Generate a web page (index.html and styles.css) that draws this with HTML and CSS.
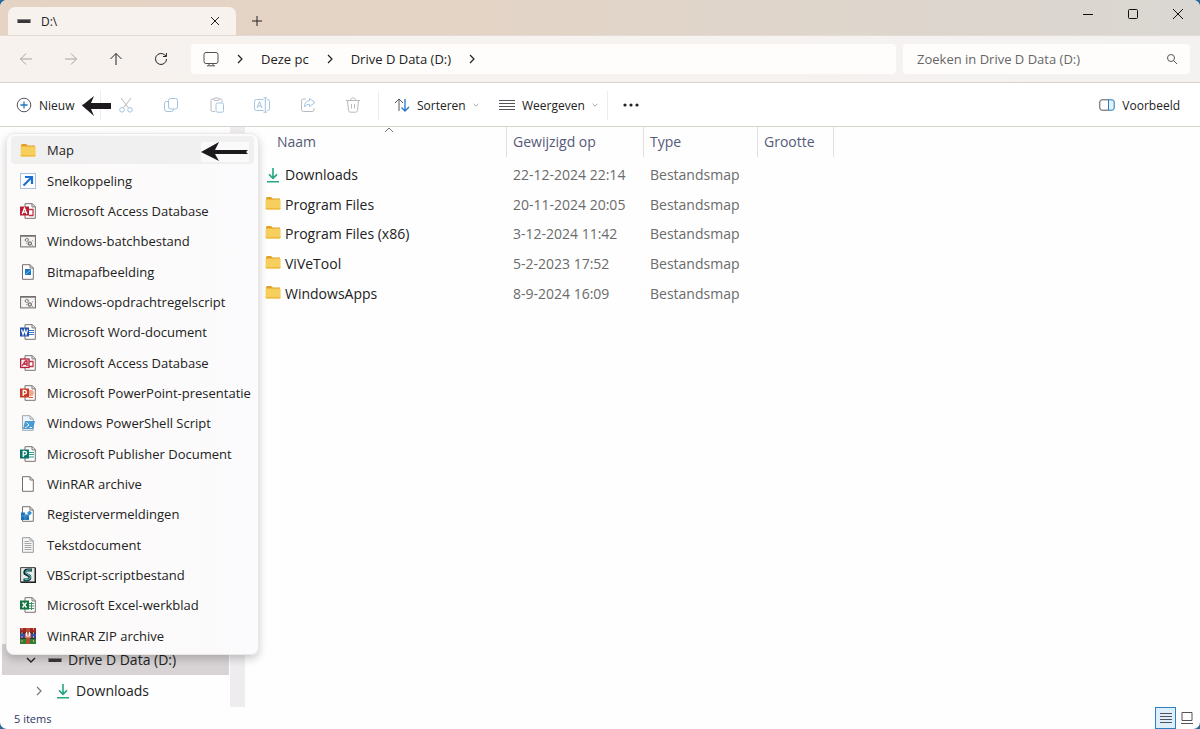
FILE: index.html
```html
<!DOCTYPE html>
<html lang="nl">
<head>
    <meta charset="UTF-8">
    <meta name="viewport" content="width=device-width, initial-scale=1.0">
    <title>D:\</title>
    <link rel="stylesheet" href="styles.css">
</head>
<body>
    <svg class="sprite" aria-hidden="true">
        <symbol id="folder" viewBox="0 0 16 14">
            <path d="M1 2.5Q1 1 2.2 1H6l1.8 1.6H15V6H1z" fill="#e2a126"/>
            <rect x="0.6" y="3.4" width="15" height="10" rx="1" fill="#f7cf5d"/>
            <path d="M0.6 12h15v.6q0 .8-1 .8h-13q-1 0-1-.8z" fill="#efba3e"/>
        </symbol>
        <symbol id="download" viewBox="0 0 14 16">
            <path d="M7 1v10M3 7.4l4 4 4-4M1 14.7h12" fill="none" stroke="#25a584" stroke-width="1.6"/>
        </symbol>
        <symbol id="drive" viewBox="0 0 14 6">
            <rect x="0.5" y="1" width="13" height="4" fill="#39363a"/>
            <path d="M1 1.5h12" stroke="#85807f" stroke-width="1"/>
        </symbol>
        <symbol id="chevron" viewBox="0 0 10 10">
            <path d="M3 1l4 4-4 4" fill="none" stroke="currentColor" stroke-width="1.2"/>
        </symbol>
        <symbol id="chevron-down" viewBox="0 0 10 10">
            <path d="M1 3l4 4 4-4" fill="none" stroke="currentColor" stroke-width="1.4"/>
        </symbol>
        <symbol id="page" viewBox="0 0 16 16">
            <path d="M2.5.7h7.6l3.2 3.2v11.4H2.5z" fill="#fff" stroke="#77716f"/>
            <path d="M10 .8V4h3.3" fill="none" stroke="#77716f"/>
        </symbol>
        <symbol id="office-page" viewBox="0 0 16 16">
            <path d="M5 .7h7.4l2.9 2.9v11.7H5z" fill="#fff" stroke="#77716f"/>
            <path d="M12 .8v3.1h3.2" fill="none" stroke="#77716f"/>
        </symbol>
        <symbol id="console" viewBox="0 0 16 16">
            <rect x="0.6" y="2.5" width="14.8" height="11.4" fill="#f4f3f3" stroke="#6e6a69"/>
            <path d="M1 3.4h14" stroke="#8c8988"/>
            <circle cx="6.8" cy="7" r="1.5" fill="none" stroke="#868382"/>
            <circle cx="9.8" cy="10.4" r="1.6" fill="none" stroke="#777372" stroke-width="1.3"/>
            <path d="M6.8 4.7v1M4.5 7h1M9.2 6l-1 .4M7.2 10.4h-1M12 8.2l.8-.6M12 12.2l.8.6" stroke="#868382"/>
        </symbol>
    </svg>

    <div class="window">
        <header class="titlebar">
            <div class="tab">
                <svg class="drive-icon"><use href="#drive"/></svg>
                <span class="tab-title">D:\</span>
                <button class="icon-button" aria-label="Tabblad sluiten">
                    <svg width="10" height="10" viewBox="0 0 10 10"><path d="M1 1l8 8M9 1L1 9"/></svg>
                </button>
            </div>
            <button class="icon-button new-tab" aria-label="Nieuw tabblad">
                <svg width="12" height="12" viewBox="0 0 12 12"><path d="M6 1v10M1 6h10"/></svg>
            </button>
            <div class="window-controls">
                <button class="icon-button" aria-label="Minimaliseren">
                    <svg width="12" height="12" viewBox="0 0 12 12"><path d="M1 6.5h10"/></svg>
                </button>
                <button class="icon-button" aria-label="Maximaliseren">
                    <svg width="12" height="12" viewBox="0 0 12 12"><rect x="1.5" y="1.5" width="9" height="9" rx="1"/></svg>
                </button>
                <button class="icon-button" aria-label="Sluiten">
                    <svg width="12" height="12" viewBox="0 0 12 12"><path d="M1 1l10 10M11 1L1 11"/></svg>
                </button>
            </div>
        </header>

        <div class="navbar">
            <div class="nav-buttons">
                <button class="icon-button dim" aria-label="Vorige">
                    <svg width="14" height="14" viewBox="0 0 14 14"><path d="M13 7H1.5M7 1.5L1.5 7 7 12.5"/></svg>
                </button>
                <button class="icon-button dim" aria-label="Volgende">
                    <svg width="14" height="14" viewBox="0 0 14 14"><path d="M1 7h11.5M7 1.5L12.5 7 7 12.5"/></svg>
                </button>
                <button class="icon-button" aria-label="Omhoog">
                    <svg width="14" height="14" viewBox="0 0 14 14"><path d="M7 13V1.5M1.5 7L7 1.5 12.5 7"/></svg>
                </button>
                <button class="icon-button" aria-label="Vernieuwen">
                    <svg width="14" height="14" viewBox="0 0 14 14"><path d="M12.5 7A5.5 5.5 0 1 1 10.8 3L12.3 4.3M12.4 1v3.5H9"/></svg>
                </button>
            </div>
            <nav class="address">
                <svg class="monitor" width="16" height="16" viewBox="0 0 16 16"><rect x="1" y="1.5" width="14" height="11" rx="2"/><path d="M6 12.5v2M10 12.5v2M4 14.8h8"/></svg>
                <svg class="chevron"><use href="#chevron"/></svg>
                <a href="#">Deze pc</a>
                <svg class="chevron"><use href="#chevron"/></svg>
                <a href="#">Drive D Data (D:)</a>
                <svg class="chevron"><use href="#chevron"/></svg>
            </nav>
            <div class="search">
                <input type="text" aria-label="Zoeken" placeholder="Zoeken in Drive D Data (D:)">
                <svg width="12" height="12" viewBox="0 0 12 12"><circle cx="5" cy="5" r="3.5"/><path d="M7.6 7.6L11 11"/></svg>
            </div>
        </div>

        <div class="toolbar">
            <button class="tool new">
                <svg width="16" height="16" viewBox="0 0 16 16"><circle cx="8" cy="8" r="6.8" stroke="#55535a"/><path d="M8 4.5v7M4.5 8h7" stroke="#2377b8" stroke-width="1.3"/></svg>
                <span>Nieuw</span>
                <svg class="caret"><use href="#chevron-down"/></svg>
            </button>
            <svg class="pointer" width="30" height="20" viewBox="0 0 30 20"><path d="M0 9.5L12 0 9 7h20v6H9l3 7z"/></svg>
            <div class="file-actions">
                <button class="icon-button" aria-label="Knippen">
                    <svg width="16" height="16" viewBox="0 0 16 16"><path d="M3 1l7.5 10M13 1L5.5 11" stroke="#b9b9bf"/><circle cx="4" cy="12.8" r="2.3"/><circle cx="12" cy="12.8" r="2.3"/></svg>
                </button>
                <button class="icon-button" aria-label="Kopiëren">
                    <svg width="16" height="16" viewBox="0 0 16 16"><rect x="5.5" y="1.5" width="9" height="10.5" rx="2"/><path d="M5 4.5H3.5q-2 0-2 2v5.5q0 2.5 2.5 2.5h4.5q2 0 2-2"/></svg>
                </button>
                <button class="icon-button" aria-label="Plakken">
                    <svg width="16" height="16" viewBox="0 0 16 16"><path d="M6 14.5H3.5q-1.5 0-1.5-1.5V3.5Q2 2 3.5 2H5M10 2h1.5Q13 2 13 3.5V5" stroke="#b9b9bf"/><rect x="5" y="1" width="5" height="2.5" rx="1" stroke="#b9b9bf"/><rect x="7" y="6" width="7.5" height="9.2" rx="1.5"/></svg>
                </button>
                <button class="icon-button" aria-label="Naam wijzigen">
                    <svg width="16" height="16" viewBox="0 0 16 16"><path d="M9.5 2.5h-7q-2 0-2 2v7q0 2 2 2h7M13 2.5h.5q2 0 2 2v7q0 2-2 2H13M9.5.8H13M9.5 15.2H13M11.3.8v14.4M3 11l2.5-6.5L8 11M3.8 9h3.4"/></svg>
                </button>
                <button class="icon-button" aria-label="Delen">
                    <svg width="16" height="16" viewBox="0 0 16 16"><path d="M6 2H3.5q-2 0-2 2v8.5q0 2 2 2H12q2 0 2-2V11" stroke="#b9b9bf"/><path d="M9.5 1.5l5.5 4-5.5 4V7.2Q6 7 4.5 10q0-6 5-6.3z"/></svg>
                </button>
                <button class="icon-button" aria-label="Verwijderen">
                    <svg class="grey" width="16" height="16" viewBox="0 0 16 16"><path d="M1 3.5h14M2.5 3.5l1 10q.2 1.7 2 1.7h5q1.8 0 2-1.7l1-10M5.5 3Q6 .8 8 .8T10.500 3M6.5 7v4.5M9.5 7v4.5"/></svg>
                </button>
            </div>
            <button class="tool sort">
                <svg width="16" height="16" viewBox="0 0 16 16"><path d="M5 14V2M1 6l4-4 4 4" stroke="#55535a"/><path d="M11 2v12M7.5 10.5L11 14l4-4" stroke="#2377c8" stroke-width="1.3"/></svg>
                <span>Sorteren</span>
                <svg class="caret"><use href="#chevron-down"/></svg>
            </button>
            <button class="tool view">
                <svg width="16" height="16" viewBox="0 0 16 16"><path d="M0 3.5h16M0 6.5h16M0 9.5h16M0 12.5h16" stroke="#55535a"/></svg>
                <span>Weergeven</span>
                <svg class="caret"><use href="#chevron-down"/></svg>
            </button>
            <button class="tool more" aria-label="Meer">
                <svg width="16" height="4" viewBox="0 0 16 4"><g fill="#222" stroke="none"><circle cx="2" cy="2" r="1.6"/><circle cx="8" cy="2" r="1.6"/><circle cx="14" cy="2" r="1.6"/></g></svg>
            </button>
            <button class="tool preview">
                <svg width="16" height="12" viewBox="0 0 16 12"><path d="M9.5.8H3Q.8.8.8 3v6Q.8 11.2 3 11.2h6.5" stroke="#55535a"/><path d="M9.5.8H13q2.2 0 2.2 2.2v6q0 2.2-2.2 2.2H9.500z" fill="#e3f2fb" stroke="#2377b8"/></svg>
                <span>Voorbeeld</span>
            </button>
        </div>

        <main class="content">
            <aside class="sidebar">
                <ul class="tree">
                    <li class="selected">
                        <svg class="chevron"><use href="#chevron-down"/></svg>
                        <svg class="drive-icon"><use href="#drive"/></svg>
                        <a href="#">Drive D Data (D:)</a>
                    </li>
                    <li class="child">
                        <svg class="chevron"><use href="#chevron"/></svg>
                        <svg class="download-icon"><use href="#download"/></svg>
                        <a href="#">Downloads</a>
                    </li>
                </ul>
                <div class="scrollbar"></div>
            </aside>

            <section class="files">
                <svg class="sort-mark" width="10" height="6" viewBox="0 0 10 6"><path d="M1 5l4-4 4 4"/></svg>
                <table>
                    <thead>
                        <tr>
                            <th class="col-name"><div class="head">Naam</div></th>
                            <th class="col-date"><div class="head">Gewijzigd op</div></th>
                            <th class="col-type"><div class="head">Type</div></th>
                            <th class="col-size"><div class="head">Grootte</div></th>
                        </tr>
                    </thead>
                    <tbody>
                        <tr>
                            <td><div class="file"><svg class="download-icon"><use href="#download"/></svg>Downloads</div></td>
                            <td>22-12-2024 22:14</td>
                            <td>Bestandsmap</td>
                            <td></td>
                        </tr>
                        <tr>
                            <td><div class="file"><svg class="folder-icon"><use href="#folder"/></svg>Program Files</div></td>
                            <td>20-11-2024 20:05</td>
                            <td>Bestandsmap</td>
                            <td></td>
                        </tr>
                        <tr>
                            <td><div class="file"><svg class="folder-icon"><use href="#folder"/></svg>Program Files (x86)</div></td>
                            <td>3-12-2024 11:42</td>
                            <td>Bestandsmap</td>
                            <td></td>
                        </tr>
                        <tr>
                            <td><div class="file"><svg class="folder-icon"><use href="#folder"/></svg>ViVeTool</div></td>
                            <td>5-2-2023 17:52</td>
                            <td>Bestandsmap</td>
                            <td></td>
                        </tr>
                        <tr>
                            <td><div class="file"><svg class="folder-icon"><use href="#folder"/></svg>WindowsApps</div></td>
                            <td>8-9-2024 16:09</td>
                            <td>Bestandsmap</td>
                            <td></td>
                        </tr>
                    </tbody>
                </table>
            </section>

            <div class="menu">
                <button class="menu-item active">
                    <svg viewBox="0 0 16 16"><use href="#folder" y="1" width="16" height="14"/></svg>
                    <span>Map</span>
                    <svg class="menu-pointer" viewBox="0 0 48 20"><path d="M0 10L18 0 14 8h33l-2 2 2 2H14l4 7z"/></svg>
                </button>
                <button class="menu-item">
                    <svg viewBox="0 0 16 16"><rect x="0.5" y="0.5" width="15" height="15" fill="#fdfdff" stroke="#a8c1df"/><path d="M3.5 12.5l8-8M5 4h7v7" fill="none" stroke="#1b6fd0" stroke-width="2.2"/></svg>
                    <span>Snelkoppeling</span>
                </button>
                <button class="menu-item">
                    <svg viewBox="0 0 16 16"><use href="#office-page"/><path d="M9 6.5h4v6H9" fill="none" stroke="#c4374a" stroke-width="1.3"/><rect y="3.5" width="9" height="9" fill="#ba1f35"/><path d="M2.2 11l2.3-6 2.3 6M3 9.2h3" fill="none" stroke="#fff" stroke-width="1.3"/></svg>
                    <span>Microsoft Access Database</span>
                </button>
                <button class="menu-item">
                    <svg viewBox="0 0 16 16"><use href="#console"/></svg>
                    <span>Windows-batchbestand</span>
                </button>
                <button class="menu-item">
                    <svg viewBox="0 0 16 16"><use href="#page"/><rect x="5" y="5" width="6" height="6" fill="#1976c5"/><path d="M5.5 10.5L10.5 6" stroke="#73c7f3"/></svg>
                    <span>Bitmapafbeelding</span>
                </button>
                <button class="menu-item">
                    <svg viewBox="0 0 16 16"><use href="#console"/></svg>
                    <span>Windows-opdrachtregelscript</span>
                </button>
                <button class="menu-item">
                    <svg viewBox="0 0 16 16"><use href="#office-page"/><path d="M9 6.5h5M9 8.5h5M9 10.5h5" stroke="#3b7cd3"/><rect y="3.5" width="9" height="9" fill="#2450ac"/><path d="M1.5 5.5L3 10.5l1.5-4.5L6 10.5l1.5-5" fill="none" stroke="#fff" stroke-width="1.2"/></svg>
                    <span>Microsoft Word-document</span>
                </button>
                <button class="menu-item">
                    <svg viewBox="0 0 16 16"><use href="#office-page"/><path d="M9 6.5h4v5H9" fill="none" stroke="#c4374a" stroke-width="1.3"/><rect x="0.6" y="4" width="8.4" height="8.5" fill="#fbe9ec" stroke="#b42039" stroke-width="1.3"/><path d="M2 11l3.5-5H7v5M4 9h3" fill="none" stroke="#b42039" stroke-width="1.3"/></svg>
                    <span>Microsoft Access Database</span>
                </button>
                <button class="menu-item">
                    <svg viewBox="0 0 16 16"><use href="#office-page"/><circle cx="10.5" cy="8" r="3.3" fill="#f3a78e"/><path d="M9 12.5h4" stroke="#d35230"/><rect y="3.5" width="9" height="9" fill="#c43a22"/><path d="M3.2 11V5.5h1.5q1.8 0 1.8 1.6T4.7 8.8H3.2" fill="none" stroke="#fff" stroke-width="1.3"/></svg>
                    <span>Microsoft PowerPoint-presentatie</span>
                </button>
                <button class="menu-item">
                    <svg viewBox="0 0 16 16"><path d="M2.5.7h7.6l3.2 3.2v11.4H2.5z" fill="#eef5fb" stroke="#9da7b0"/><path d="M10 1v3h3" fill="none" stroke="#9da7b0"/><path d="M5 6h10l-2 8H3z" fill="#4a9ad4"/><path d="M6.5 7.5L9 10l-4 3M9.5 12.5H12" fill="none" stroke="#e6f6ff"/></svg>
                    <span>Windows PowerShell Script</span>
                </button>
                <button class="menu-item">
                    <svg viewBox="0 0 16 16"><use href="#office-page"/><path d="M9 6.5h5M9 8.5h5M9 11h5" stroke="#2aa391"/><rect y="3.5" width="9" height="9" fill="#0b7568"/><path d="M3.2 11V5.5h1.5q1.8 0 1.8 1.6T4.7 8.8H3.2" fill="none" stroke="#fff" stroke-width="1.3"/></svg>
                    <span>Microsoft Publisher Document</span>
                </button>
                <button class="menu-item">
                    <svg viewBox="0 0 16 16"><use href="#page"/></svg>
                    <span>WinRAR archive</span>
                </button>
                <button class="menu-item">
                    <svg viewBox="0 0 16 16"><use href="#page"/><path d="M1 6.5h4v2h4V14H1z" fill="#1d71b5"/><path d="M1 10h8M5 6.500V14" stroke="#6db3e2" stroke-width=".6"/><path d="M9.500 4.500l2.500 2.500-2.500 2.500L7 7z" fill="#3191d6"/></svg>
                    <span>Registervermeldingen</span>
                </button>
                <button class="menu-item">
                    <svg viewBox="0 0 16 16"><path d="M2.5.7h7.6l3.2 3.2v11.4H2.5z" fill="#f5f5f5" stroke="#999"/><path d="M10 1v3h3M4.5 4.5H9M4.5 6.5h7M4.5 8.5h7M4.5 10.5h7M4.5 12.5h7" fill="none" stroke="#a5a5a5"/></svg>
                    <span>Tekstdocument</span>
                </button>
                <button class="menu-item">
                    <svg viewBox="0 0 16 16"><path d="M.6.6h14.8v14.8H.6z" fill="#e5ecec" stroke="#444"/><path d="M1 15.3h14.3V1" fill="none" stroke="#222" stroke-width="1.4"/><path d="M12 3H7.5Q4 3.5 5 6.500l4.500 2.500q1.500 3-2 4H3.500" fill="none" stroke="#17282b" stroke-width="3"/><path d="M11.500 3H8Q5 4 6 6.200l4 2.600q1 3-2.500 3.800H4.500" fill="none" stroke="#49c5c5" stroke-width="1.2"/></svg>
                    <span>VBScript-scriptbestand</span>
                </button>
                <button class="menu-item">
                    <svg viewBox="0 0 16 16"><use href="#office-page"/><path d="M9 6.5h5M9 9h5M9 11.5h5M11.5 5v8" stroke="#3d9662"/><rect y="3.5" width="9" height="9" fill="#167341"/><path d="M2.5 5.5l4 5M6.5 5.5l-4 5" stroke="#fff" stroke-width="1.4"/></svg>
                    <span>Microsoft Excel-werkblad</span>
                </button>
                <button class="menu-item">
                    <svg viewBox="0 0 16 16"><path d="M0 0h16v5H0z" fill="#a1252c"/><path d="M0 5h16v5H0z" fill="#344fae"/><path d="M0 10h16v6H0z" fill="#2e7e39"/><path d="M0 5h16M0 10.2h16" stroke="#302331"/><path d="M2 0v16M13.5 0v16" stroke="#cdab55" stroke-dasharray="2 2"/><path d="M6 0h4v16H6z" fill="#b3502c"/><path d="M5 5h6v5H5z" fill="#e07a5a"/><path d="M6.500 4v4h3V4" fill="none" stroke="#fff"/></svg>
                    <span>WinRAR ZIP archive</span>
                </button>
            </div>
        </main>

        <footer class="statusbar">
            <span class="count">5 items</span>
            <button class="view-toggle on" aria-label="Details">
                <svg width="12" height="12" viewBox="0 0 12 12"><path d="M0 1.5h12M0 4.5h12M0 7.5h12M0 10.5h12"/></svg>
            </button>
            <button class="view-toggle" aria-label="Grote pictogrammen">
                <svg width="12" height="12" viewBox="0 0 12 12"><path d="M1 .5h10v8H1zM0 11.5h12"/></svg>
            </button>
        </footer>
    </div>
</body>
</html>
```

FILE: styles.css
```css
* {
    box-sizing: border-box;
}

body {
    margin: 0;
    background-color: #2b6a9b;
    font-family: "Open Sans", "Noto Sans", sans-serif;
    font-size: 13px;
    color: #222;
}

button {
    border: none;
    background: none;
    padding: 0;
    font: inherit;
    color: inherit;
}

a {
    color: inherit;
    text-decoration: none;
}

svg {
    flex: none;
    fill: none;
    stroke: currentColor;
}

use {
    stroke: none;
}

.sprite {
    display: none;
}

.window {
    display: flex;
    flex-direction: column;
    min-height: 100vh;
    border-radius: 7px;
    overflow: hidden;
    background-color: #fefefe;
}

.icon-button {
    display: flex;
    align-items: center;
    justify-content: center;
}

/* title bar */
.titlebar {
    display: flex;
    align-items: flex-end;
    height: 35px;
    padding-left: 8px;
    background: linear-gradient(to right, #e5d3c3, #e3d4c6 40%, #dad7d2);
}

.tab {
    display: flex;
    align-items: center;
    width: 228px;
    height: 28px;
    padding: 0 16px 0 9px;
    border-radius: 7px 7px 0 0;
    background-color: #f7f2ee;
    font-size: 12px;
}

.tab-title {
    flex: 1;
    padding-left: 10px;
}

.drive-icon {
    width: 14px;
    height: 6px;
}

.new-tab {
    width: 42px;
    height: 28px;
}

.window-controls {
    display: flex;
    align-self: flex-start;
    margin-left: auto;
}

.window-controls .icon-button {
    width: 45px;
    height: 27px;
    color: #111;
}

/* navigation */
.navbar {
    display: flex;
    align-items: center;
    gap: 7px;
    height: 48px;
    padding: 0 10px 0 3px;
    border-top: 1px solid #e3dad5;
    border-bottom: 1px solid #d9d2cf;
    background: linear-gradient(to right, #f7f2ee, #f4f2f1);
}

.nav-buttons {
    display: grid;
    grid-template-columns: repeat(4, 1fr);
    width: 181px;
}

.dim {
    color: #a8a3a0;
}

.address,
.search {
    display: flex;
    align-items: center;
    height: 30px;
    border-radius: 4px;
    background-color: #fefdfc;
}

.address {
    flex: 1;
    gap: 16px;
    padding-left: 12px;
}

.monitor {
    color: #55504e;
}

.chevron {
    width: 10px;
    height: 10px;
}

.search {
    width: 287px;
    padding: 0 12px 0 14px;
    color: #555;
}

.search input {
    flex: 1;
    min-width: 0;
    padding: 0;
    border: none;
    outline: none;
    background: none;
    font: inherit;
}

.search input::placeholder {
    color: #666;
}

/* toolbar */
.toolbar {
    position: relative;
    display: flex;
    align-items: center;
    height: 44px;
    padding-top: 1px;
    border-bottom: 1px solid #d8d4cd;
    background-color: #fff;
    font-size: 12px;
}

.tool {
    display: flex;
    align-items: center;
    gap: 7px;
    height: 29px;
}

.new {
    width: 101px;
    padding-left: 16px;
    border-right: 1px solid #ececec;
}

.caret {
    width: 6px;
    height: 6px;
    color: #999;
}

.pointer {
    position: absolute;
    left: 82px;
    top: 13px;
    fill: #1c1a1c;
    stroke: none;
}

.file-actions {
    display: grid;
    grid-template-columns: repeat(6, 1fr);
    width: 275px;
    padding-left: 2px;
    color: #a3c4df;
}

.grey {
    color: #b9b9bf;
}

.sort {
    width: 107px;
    padding-left: 15px;
    margin-left: 2px;
    border-left: 1px solid #ececec;
}

.view {
    width: 122px;
    padding-left: 14px;
}

.more {
    padding-left: 15px;
    border-left: 1px solid #ececec;
}

.preview {
    margin-left: auto;
    padding-right: 20px;
}

/* content */
.content {
    position: relative;
    display: flex;
    flex: 1;
}

.sidebar {
    display: flex;
    align-items: flex-end;
    width: 245px;
    padding-left: 2px;
    font-size: 14px;
}

.tree {
    flex: 1;
    margin: 0 1px 1px 0;
    padding: 0;
    list-style: none;
}

.tree li {
    display: flex;
    align-items: center;
    gap: 6px;
    height: 31px;
    padding-left: 24px;
}

.tree .chevron {
    margin-right: 6px;
}

.tree .selected {
    background-color: #d8d4d5;
}

.tree .child {
    padding-left: 32px;
}

.child .chevron {
    color: #777;
}

.scrollbar {
    align-self: stretch;
    width: 15px;
    background-color: #eeecef;
}

.files {
    position: relative;
    flex: 1;
}

.files table {
    width: 589px;
    height: 181px;
    border-collapse: collapse;
    table-layout: fixed;
    font-size: 14px;
}

.files th {
    height: 33px;
    padding: 0;
    vertical-align: top;
    text-align: left;
    font-weight: normal;
    color: #565a78;
}

.head {
    height: 30px;
    padding-left: 6px;
    border-right: 1px solid #e3e0e2;
    line-height: 30px;
}

.col-name {
    width: 262px;
}

.col-name .head {
    padding-left: 32px;
}

.col-date {
    width: 137px;
}

.col-type {
    width: 114px;
}

.files td {
    padding: 0 6px;
    color: #6b6b6b;
}

.files td:first-child {
    padding-left: 20px;
    color: #222;
}

.file {
    display: flex;
    align-items: center;
    gap: 4px;
}

.folder-icon {
    width: 16px;
    height: 14px;
}

.file .folder-icon {
    margin-bottom: 3px;
}

.download-icon {
    width: 14px;
    height: 16px;
}

.file .download-icon {
    width: 16px;
}

.sort-mark {
    position: absolute;
    left: 139px;
    top: 0;
    color: #777;
}

/* new item menu */
.menu {
    position: absolute;
    top: 6px;
    left: 6px;
    display: grid;
    grid-auto-rows: 1fr;
    width: 253px;
    min-height: 522px;
    padding: 1px 4px 3px;
    border: 1px solid #ebe8e8;
    border-radius: 8px;
    background: linear-gradient(to right, #fdfbf9, #fbfafc);
    box-shadow: 0 4px 8px rgba(0, 0, 0, 0.2);
}

.menu-item {
    display: flex;
    align-items: center;
    gap: 11px;
    margin: 1px 0;
    padding-left: 9px;
    border-radius: 4px;
    white-space: nowrap;
}

.menu-item svg {
    width: 16px;
    height: 16px;
    stroke: none;
}

.menu-item.active {
    background-color: #f1f0f0;
}

.menu-item .menu-pointer {
    width: 48px;
    height: 20px;
    margin: 4px 5px 0 auto;
    background-color: #fafafa;
    fill: #1c1a1c;
}

/* status bar */
.statusbar {
    display: flex;
    align-items: center;
    height: 22px;
    padding: 0 3px 0 14px;
    font-size: 11px;
    color: #2f3566;
}

.count {
    flex: 1;
}

.view-toggle {
    display: flex;
    align-items: center;
    justify-content: center;
    width: 21px;
    height: 22px;
    color: #55505a;
}

.view-toggle.on {
    border: 1px solid #2b80c4;
    background-color: #dceffa;
}
```
